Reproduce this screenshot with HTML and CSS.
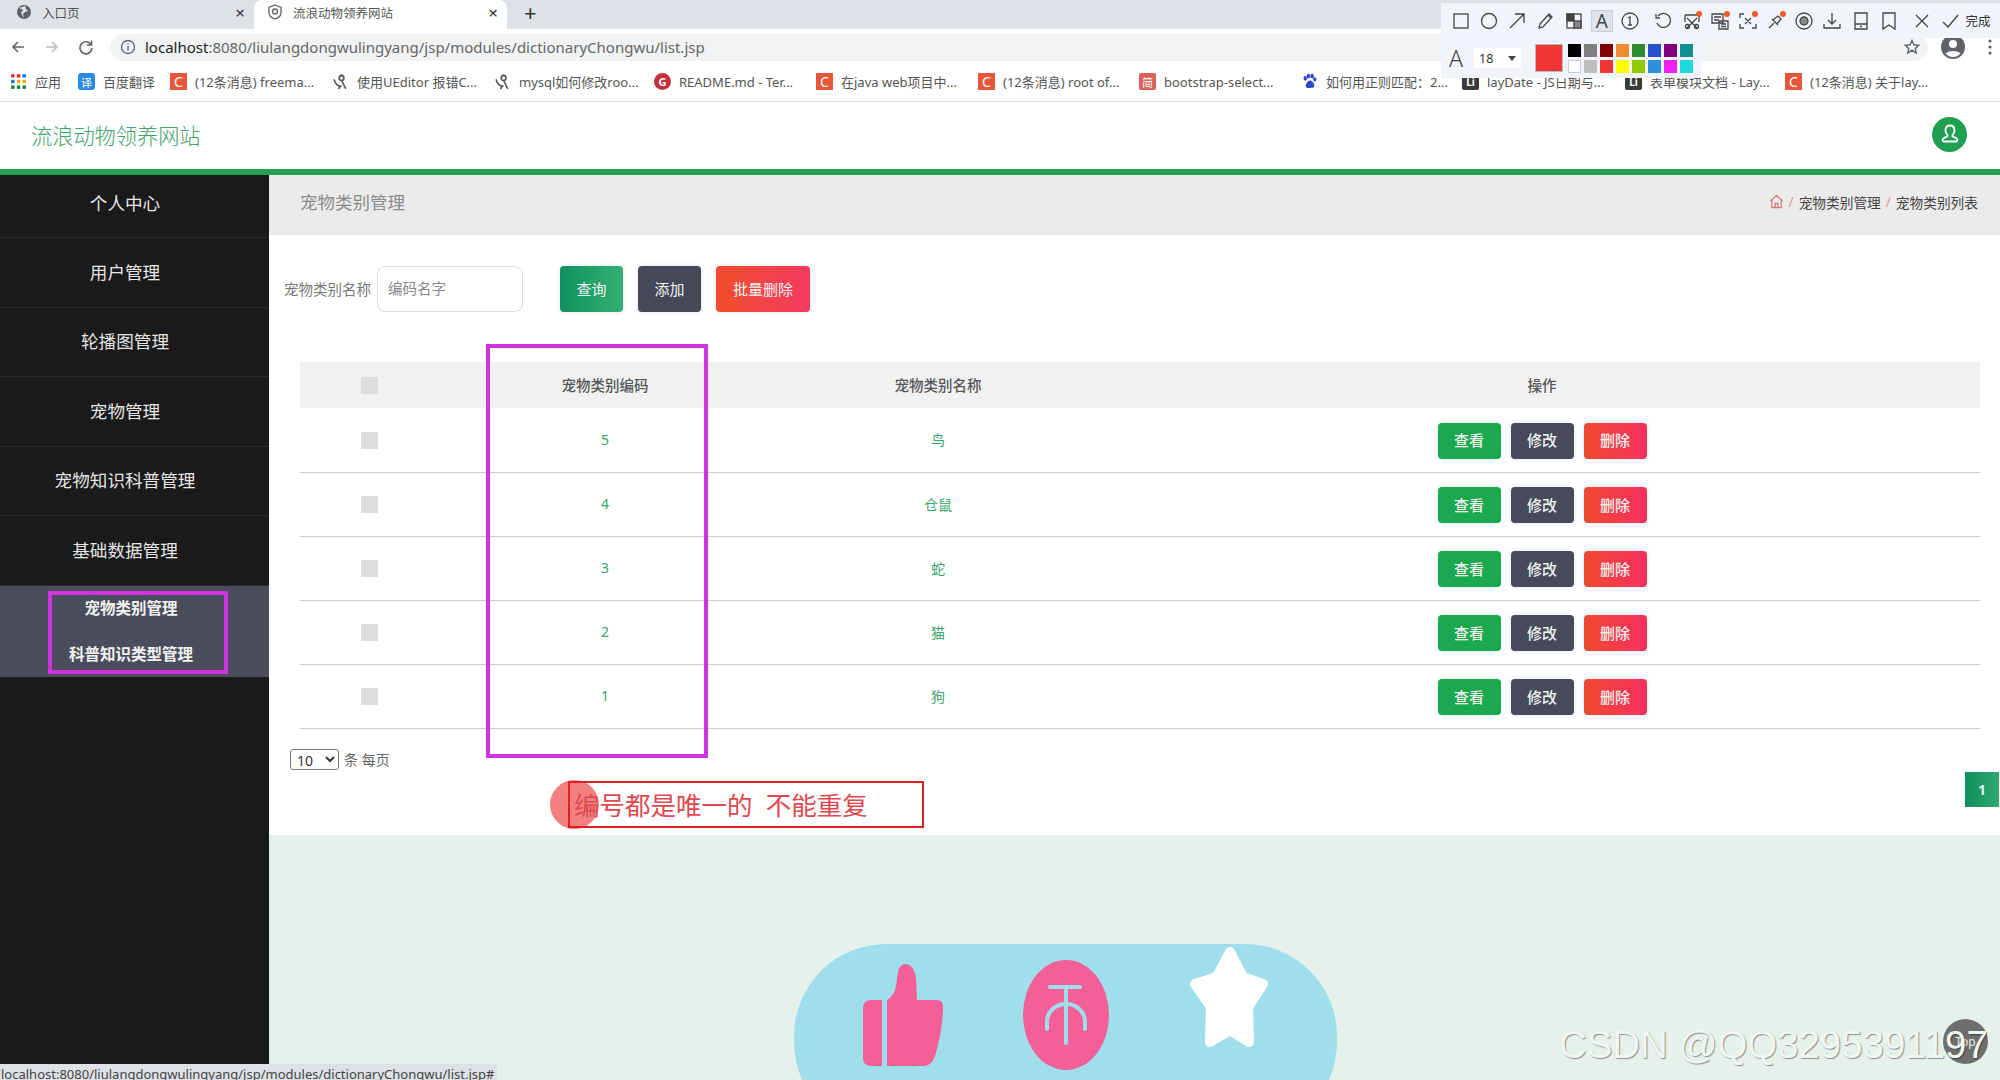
FILE: index.html
```html
<!DOCTYPE html>
<html lang="zh-CN">
<head>
    <meta charset="UTF-8">
    <title>流浪动物领养网站</title>
    <link rel="stylesheet" href="styles.css">
</head>
<body>

    <!-- Browser tabs -->
    <div class="tabstrip">
        <div class="tab">
            <svg class="tab-icon" viewBox="0 0 16 16"><circle cx="8" cy="8" r="7" fill="#5f6368"/><path d="M3 4l3 1 1 2-2 1 1 3 2 3-1-4 2-2 3-1-2-2-1-3-3 1z" fill="#dee1e6"/></svg>
            <span class="tab-title">入口页</span>
            <span class="tab-close">×</span>
        </div>
        <div class="tab tab-active">
            <svg class="tab-icon" viewBox="0 0 16 16"><path d="M8 1l6 2.5V9c0 3-3 5-6 6-3-1-6-3-6-6V3.500z" fill="none" stroke="#5f6368" stroke-width="1.300"/><circle cx="8" cy="7.500" r="2.500" fill="none" stroke="#5f6368" stroke-width="1.300"/></svg>
            <span class="tab-title">流浪动物领养网站</span>
            <span class="tab-close">×</span>
        </div>
        <span class="tab-new">+</span>
    </div>

    <!-- Address bar -->
    <div class="toolbar">
        <svg class="nav-icon" viewBox="0 0 16 16"><path d="M14 8H3M8 3L3 8l5 5" fill="none" stroke="#5f6368" stroke-width="1.600"/></svg>
        <svg class="nav-icon" viewBox="0 0 16 16"><path d="M2 8h11M8 3l5 5-5 5" fill="none" stroke="#b8babd" stroke-width="1.600"/></svg>
        <svg class="nav-icon" viewBox="0 0 16 16"><path d="M13 5.500A6 6 0 1 0 14 9M13.500 1.500v4.500H9" fill="none" stroke="#5f6368" stroke-width="1.600"/></svg>
        <div class="address">
            <svg class="info-icon" viewBox="0 0 16 16"><circle cx="8" cy="8" r="6.500" fill="none" stroke="#5f6368" stroke-width="1.300"/><path d="M8 7v4.500M8 4.500v1.300" stroke="#5f6368" stroke-width="1.400"/></svg>
            <span class="url"><b>localhost</b>:8080/liulangdongwulingyang/jsp/modules/dictionaryChongwu/list.jsp</span>
            <svg class="star-icon" viewBox="0 0 16 16"><path d="M8 1.500l2 4.300 4.600.5-3.400 3.100 1 4.600L8 11.200l-4.200 2.800 1-4.600L1.400 6.300 6 5.800z" fill="none" stroke="#5f6368" stroke-width="1.400"/></svg>
        </div>
        <svg class="profile-icon" viewBox="0 0 24 24"><circle cx="12" cy="12" r="12" fill="#5f6368"/><circle cx="12" cy="9" r="4" fill="#fff"/><path d="M4.500 18.500C7 15 17 15 19.500 18.500 17.500 21 14.500 22 12 22s-5.500-1-7.500-3.500z" fill="#fff"/></svg>
        <svg class="dots-icon" viewBox="0 0 4 16"><circle cx="2" cy="2" r="1.600" fill="#5f6368"/><circle cx="2" cy="8" r="1.600" fill="#5f6368"/><circle cx="2" cy="14" r="1.600" fill="#5f6368"/></svg>
    </div>

    <!-- Bookmarks -->
    <div class="bookmarks">
        <div class="mark">
            <svg class="fav" viewBox="0 0 15 15">
                <g fill="#d93025"><rect x="1" y="1" width="3" height="3"/><rect x="6" y="1" width="3" height="3"/></g>
                <g fill="#1a73e8"><rect x="11" y="1" width="3" height="3"/><rect x="1" y="6" width="3" height="3"/></g>
                <g fill="#f9ab00"><rect x="6" y="6" width="3" height="3"/><rect x="11" y="6" width="3" height="3"/></g>
                <g fill="#188038"><rect x="1" y="11" width="3" height="3"/><rect x="6" y="11" width="3" height="3"/><rect x="11" y="11" width="3" height="3"/></g>
            </svg>
            <span>应用</span>
        </div>
        <div class="mark"><i class="tile tile-blue">译</i><span>百度翻译</span></div>
        <div class="mark"><i class="tile tile-orange">C</i><span>(12条消息) freema...</span></div>
        <div class="mark">
            <svg class="fav" viewBox="0 0 16 16"><path d="M2 6c1 5 4 7 7 6M9 2c-3 1-3 5 0 5s3-4 0-5zM9 7l4 8M8 12l-2 3" fill="none" stroke="#555" stroke-width="1.500"/></svg>
            <span>使用UEditor 报错C...</span>
        </div>
        <div class="mark">
            <svg class="fav" viewBox="0 0 16 16"><path d="M2 6c1 5 4 7 7 6M9 2c-3 1-3 5 0 5s3-4 0-5zM9 7l4 8M8 12l-2 3" fill="none" stroke="#555" stroke-width="1.500"/></svg>
            <span>mysql如何修改roo...</span>
        </div>
        <div class="mark"><i class="tile tile-round">G</i><span>README.md - Ter...</span></div>
        <div class="mark"><i class="tile tile-orange">C</i><span>在java web项目中...</span></div>
        <div class="mark"><i class="tile tile-orange">C</i><span>(12条消息) root of...</span></div>
        <div class="mark"><i class="tile tile-red">简</i><span>bootstrap-select...</span></div>
        <div class="mark">
            <svg class="fav" viewBox="0 0 16 16" fill="#3245c8"><ellipse cx="4" cy="5" rx="1.600" ry="2.200"/><ellipse cx="7" cy="3" rx="1.600" ry="2.200"/><ellipse cx="10.500" cy="3" rx="1.600" ry="2.200"/><ellipse cx="13" cy="6" rx="1.500" ry="2"/><path d="M8.500 7c-2 0-4 3-4 5s2 2.500 4 2 4 .500 4-2-2-5-4-5z"/></svg>
            <span>如何用正则匹配：2...</span>
        </div>
        <div class="mark"><i class="tile tile-dark">Li</i><span>layDate - JS日期与...</span></div>
        <div class="mark"><i class="tile tile-dark">Li</i><span>表单模块文档 - Lay...</span></div>
        <div class="mark"><i class="tile tile-orange">C</i><span>(12条消息) 关于lay...</span></div>
    </div>

    <!-- Site header -->
    <header class="site-head">
        <span class="site-title">流浪动物领养网站</span>
        <div class="avatar">
            <svg viewBox="0 0 24 24" width="24" height="24"><path d="M12 3.500c-3 0-4.500 2.300-4.500 5 0 2 .8 3.500 2 4.500v1.500c-2 1-5 1.500-5 3.500 0 1 .5 1.500 1.500 1.500h12c1 0 1.500-.5 1.500-1.500 0-2-3-2.500-5-3.500V13c1.200-1 2-2.500 2-4.500 0-2.700-1.500-5-4.500-5z" fill="none" stroke="#fff" stroke-width="1.800"/></svg>
        </div>
    </header>

    <div class="site-body">
        <!-- Left menu -->
        <aside class="sidebar">
            <div class="side-item">个人中心</div>
            <div class="side-item">用户管理</div>
            <div class="side-item">轮播图管理</div>
            <div class="side-item">宠物管理</div>
            <div class="side-item">宠物知识科普管理</div>
            <div class="side-item">基础数据管理</div>
            <div class="side-sub">
                <div class="sub-item">宠物类别管理</div>
                <div class="sub-item">科普知识类型管理</div>
            </div>
        </aside>

        <main class="main">
            <div class="page-head">
                <span class="page-title">宠物类别管理</span>
                <div class="crumbs">
                    <svg class="home-icon" viewBox="0 0 16 16"><path d="M1.500 7.500L8 1.500l6.500 6M3 6.500V14.500h10V6.500M6.500 14.500V10h3v4.500" fill="none" stroke="#d9706f" stroke-width="1.200"/></svg>
                    <span class="crumb-sep">/</span>
                    <span>宠物类别管理</span>
                    <span class="crumb-sep">/</span>
                    <span>宠物类别列表</span>
                </div>
            </div>

            <section class="card">
                <div class="search-row">
                    <label class="search-label">宠物类别名称</label>
                    <input class="search-input" type="text" placeholder="编码名字">
                    <button class="btn btn-query">查询</button>
                    <button class="btn btn-add">添加</button>
                    <button class="btn btn-batch">批量删除</button>
                </div>

                <table class="list">
                    <colgroup>
                        <col class="col-check"><col class="col-code"><col class="col-name"><col>
                    </colgroup>
                    <thead>
                        <tr>
                            <th><span class="check"></span></th>
                            <th>宠物类别编码</th>
                            <th>宠物类别名称</th>
                            <th>操作</th>
                        </tr>
                    </thead>
                    <tbody>
                        <tr>
                            <td><span class="check"></span></td><td>5</td><td>鸟</td>
                            <td class="actions"><button class="mini mini-view">查看</button><button class="mini mini-edit">修改</button><button class="mini mini-del">删除</button></td>
                        </tr>
                        <tr>
                            <td><span class="check"></span></td><td>4</td><td>仓鼠</td>
                            <td class="actions"><button class="mini mini-view">查看</button><button class="mini mini-edit">修改</button><button class="mini mini-del">删除</button></td>
                        </tr>
                        <tr>
                            <td><span class="check"></span></td><td>3</td><td>蛇</td>
                            <td class="actions"><button class="mini mini-view">查看</button><button class="mini mini-edit">修改</button><button class="mini mini-del">删除</button></td>
                        </tr>
                        <tr>
                            <td><span class="check"></span></td><td>2</td><td>猫</td>
                            <td class="actions"><button class="mini mini-view">查看</button><button class="mini mini-edit">修改</button><button class="mini mini-del">删除</button></td>
                        </tr>
                        <tr>
                            <td><span class="check"></span></td><td>1</td><td>狗</td>
                            <td class="actions"><button class="mini mini-view">查看</button><button class="mini mini-edit">修改</button><button class="mini mini-del">删除</button></td>
                        </tr>
                    </tbody>
                </table>

                <div class="page-size">
                    <select class="size-select"><option>10</option></select>
                    <span>条 每页</span>
                </div>
                <div class="pager"><span class="page-num">1</span></div>
            </section>

            <!-- Like / coin / favourite -->
            <div class="social">
                <div class="pill">
                    <svg class="thumb" viewBox="0 0 80 102"><path d="M8 36h11v66H8c-5 0-8-3-8-8V44c0-5 3-8 8-8z" fill="#f35f97"/><path d="M24 36c5-3 8-8 9-14l2-14c1-5 4-8 7-8 6 0 10 6 11 14l1 22h20c4 0 6 3 6 7 0 15-4 37-8 49-2 6-6 10-12 10H24z" fill="#f35f97"/></svg>
                    <svg class="coin" viewBox="0 0 86 110"><ellipse cx="43" cy="55" rx="43" ry="55" fill="#f35f97"/><path d="M27 27h30M43 30v53M24 69v-7c0-10 8-18 19-18s19 8 19 18v7" fill="none" stroke="#a0deec" stroke-width="4" stroke-linecap="round"/></svg>
                    <svg class="fave" viewBox="0 0 80 102"><polygon points="41,6 54,31 74,38 59,61 60,96 41,84 21,96 22,61 6,38 28,31" fill="#fff" stroke="#fff" stroke-width="10" stroke-linejoin="round"/></svg>
                </div>
            </div>
        </main>
    </div>

    <!-- Screenshot tool panel -->
    <div class="shot-tools">
        <div class="shot-row">
            <svg class="st" viewBox="0 0 20 20"><rect x="3" y="3" width="14" height="14"/></svg>
            <svg class="st" viewBox="0 0 20 20"><circle cx="10" cy="10" r="7.500"/></svg>
            <svg class="st" viewBox="0 0 20 20"><path d="M3 17L17 3M8 3h9v9"/></svg>
            <svg class="st" viewBox="0 0 20 20"><path d="M4 13L13 3l3 3-9 10-4 1zM12 4l3 3"/></svg>
            <svg class="st" viewBox="0 0 20 20"><rect x="3" y="3" width="14" height="14"/><rect x="3" y="3" width="7" height="7" fill="#444"/><rect x="10" y="10" width="7" height="7" fill="#888"/></svg>
            <span class="st st-on">A</span>
            <svg class="st" viewBox="0 0 20 20"><circle cx="10" cy="10" r="8"/><path d="M8 7l2-1v8M8 14h4"/></svg>
            <svg class="st st-gap" viewBox="0 0 20 20"><path d="M5 5a7 7 0 1 1-1 7M3 3v4h4"/></svg>
            <svg class="st" viewBox="0 0 20 20"><path d="M3 4h14v7M3 4v7M5 17l10-10M15 17L5 7"/><circle cx="5.500" cy="15.500" r="2"/><circle cx="14.500" cy="15.500" r="2"/><circle class="dot" cx="17" cy="3" r="3"/></svg>
            <svg class="st" viewBox="0 0 20 20"><path d="M2 3h11v9H2zM4 6h7M4 9h5M9 10h9v8H9zM11 13h5M11 15.500h5"/><circle class="dot" cx="17" cy="3" r="3"/></svg>
            <svg class="st" viewBox="0 0 20 20"><path d="M2 7V3h4M18 13v4h-4M2 13v4h4M14 3h2M7 7l6 6M13 7l-6 6"/><circle class="dot" cx="17" cy="3" r="3"/></svg>
            <svg class="st" viewBox="0 0 20 20"><path d="M3 17l5-5M6 8l6 6M7 9l5-4 3 3-4 5M12 5l3 3"/><circle class="dot" cx="17" cy="3" r="3"/></svg>
            <svg class="st" viewBox="0 0 20 20"><circle cx="10" cy="10" r="8"/><circle cx="10" cy="10" r="4" fill="#888"/></svg>
            <svg class="st" viewBox="0 0 20 20"><path d="M10 2v11M6 9l4 4 4-4M2 13v4h16v-4"/></svg>
            <svg class="st" viewBox="0 0 20 20"><path d="M4 2h12v16H4zM4 13h12M9 15.500h2"/></svg>
            <svg class="st" viewBox="0 0 20 20"><path d="M4 2h12v16l-6-4-6 4z"/></svg>
            <svg class="st st-gap" viewBox="0 0 20 20"><path d="M4 4l12 12M16 4L4 16"/></svg>
            <svg class="st" viewBox="0 0 20 20"><path d="M3 11l5 5L18 4"/></svg>
            <span class="st-done">完成</span>
        </div>
        <div class="shot-row2">
            <span class="size-a">A</span>
            <div class="size-box"><span>18</span><i class="size-caret"></i></div>
            <span class="color-now"></span>
            <div class="palette">
                <i class="c-black"></i><i class="c-gray"></i><i class="c-maroon"></i><i class="c-orange"></i><i class="c-green"></i><i class="c-blue"></i><i class="c-purple"></i><i class="c-teal"></i>
                <i class="c-white"></i><i class="c-silver"></i><i class="c-red"></i><i class="c-yellow"></i><i class="c-lime"></i><i class="c-sky"></i><i class="c-pink"></i><i class="c-cyan"></i>
            </div>
        </div>
    </div>

    <!-- Annotations drawn over the page -->
    <div class="mark-box mark-side"></div>
    <div class="mark-box mark-code"></div>
    <div class="note-dot"></div>
    <div class="note">编号都是唯一的&nbsp;&nbsp;不能重复</div>

    <div class="to-top">Top</div>
    <div class="watermark">CSDN @QQ3295391197</div>
    <div class="status-bar">localhost:8080/liulangdongwulingyang/jsp/modules/dictionaryChongwu/list.jsp#</div>

</body>
</html>
```

FILE: styles.css
```css
* {
    box-sizing: border-box;
}

html, body {
    height: 100%;
}

body {
    margin: 0;
    width: 2000px;
    height: 1080px;
    overflow: hidden;
    position: relative;
    display: flex;
    flex-direction: column;
    background-color: #fff;
    color: #444;
    font-family: "Noto Sans", "Noto Sans CJK SC", sans-serif;
}

/* browser tabs */
.tabstrip {
    display: flex;
    align-items: center;
    height: 29px;
    background-color: #dee1e6;
}

.tab {
    display: flex;
    align-items: center;
    width: 254px;
    height: 29px;
    padding: 0 9px 5px 16px;
    font-size: 12.500px;
    color: #555;
}

.tab-active {
    width: 253px;
    padding-left: 13px;
    background-color: #fff;
    border-radius: 8px 8px 0 0;
}

.tab-icon {
    width: 16px;
    height: 16px;
    margin-right: 10px;
}

.tab-title {
    flex: 1;
}

.tab-close {
    font-size: 17px;
    line-height: 1;
    color: #333;
}

.tab-new {
    margin: 0 0 5px 17px;
    font-size: 22px;
    line-height: 1;
    color: #333;
}

/* address bar */
.toolbar {
    display: flex;
    align-items: center;
    height: 34px;
    padding: 2px 0 0 10px;
    background-color: #fff;
}

.nav-icon {
    width: 16px;
    height: 16px;
    margin-right: 18px;
}

.nav-icon:nth-child(3) {
    margin-right: 16px;
}

.address {
    display: flex;
    align-items: center;
    width: 1818px;
    height: 27px;
    padding: 0 8px 0 10px;
    border-radius: 14px;
    background-color: #f1f3f4;
}

.info-icon {
    width: 16px;
    height: 16px;
    margin-right: 9px;
}

.url {
    flex: 1;
    font-size: 15px;
    color: #666;
}

.url b {
    font-weight: 400;
    color: #222;
}

.star-icon {
    width: 16px;
    height: 16px;
}

.profile-icon {
    width: 24px;
    height: 24px;
    margin-left: 13px;
}

.dots-icon {
    width: 4px;
    height: 16px;
    margin-left: 23px;
}

/* bookmarks */
.bookmarks {
    display: grid;
    grid-template-columns: 68px 92px 162px 162px 160px 162px 162px 161px 162px 161px 163px 160px 1fr;
    align-items: center;
    height: 39px;
    padding: 0 0 1px 10px;
    border-bottom: 1px solid #ddd;
    font-size: 13px;
    color: #555;
}

.mark {
    display: flex;
    align-items: center;
    white-space: nowrap;
    overflow: hidden;
}

.fav {
    flex: none;
    width: 17px;
    height: 17px;
    margin-right: 8px;
}

.tile {
    flex: none;
    display: flex;
    align-items: center;
    justify-content: center;
    width: 17px;
    height: 17px;
    margin-right: 8px;
    font-style: normal;
    font-size: 11px;
    color: #fff;
}

.tile-blue { background-color: #2b8ce8; border-radius: 3px; }
.tile-orange { background-color: #e9563a; font-size: 14px; }
.tile-red { background-color: #d9635c; border-radius: 2px; }
.tile-dark { background-color: #3a3a3a; border-radius: 2px; font-size: 10px; font-weight: 700; }
.tile-round { background-color: #c62f3e; border-radius: 50%; font-weight: 700; }

/* site header */
.site-head {
    display: flex;
    align-items: center;
    justify-content: space-between;
    height: 73px;
    padding: 0 33px 3px 31px;
    border-bottom: 6px solid #22a04f;
    background-color: #fff;
}

.site-title {
    font-size: 21.200px;
    font-weight: 300;
    color: #3fa36c;
}

.avatar {
    display: flex;
    align-items: center;
    justify-content: center;
    width: 35px;
    height: 35px;
    border-radius: 50%;
    background-color: #1fa050;
}

.site-body {
    flex: 1;
    display: flex;
    min-height: 0;
}

/* left menu */
.sidebar {
    flex: none;
    width: 269px;
    background-color: #1a1a1a;
}

.side-item {
    display: flex;
    align-items: center;
    justify-content: center;
    height: 69.500px;
    padding: 0 19px 2px 0;
    font-size: 17.600px;
    color: #e6e6e6;
}

.side-item:first-child {
    height: 62px;
    padding-bottom: 8px;
}

.side-item + .side-item,
.side-sub {
    border-top: 1px solid #2b2b2b;
}

.side-sub {
    height: 92px;
    background-color: #4a4d5c;
}

.sub-item {
    display: flex;
    align-items: center;
    justify-content: center;
    width: 262px;
    height: 46px;
    padding-bottom: 2px;
    font-size: 15.500px;
    font-weight: 700;
    color: #f2f2f2;
}

/* main column */
.main {
    flex: 1;
    display: flex;
    flex-direction: column;
    min-width: 0;
    background-color: #e5f2ec;
}

.page-head {
    display: flex;
    align-items: center;
    justify-content: space-between;
    height: 60px;
    padding: 0 22px 7px 31px;
    background-color: #ebebeb;
}

.page-title {
    font-size: 17.500px;
    color: #8c8c8c;
}

.crumbs {
    display: flex;
    align-items: center;
    gap: 5px;
    font-size: 13.700px;
    color: #444;
}

.home-icon {
    width: 15px;
    height: 15px;
}

.crumb-sep {
    color: #d99;
}

.card {
    background-color: #fff;
    padding-bottom: 28px;
}

.search-row {
    display: flex;
    align-items: center;
    height: 46px;
    margin-top: 31px;
    padding-left: 15px;
}

.search-label {
    width: 93px;
    padding-bottom: 2px;
    font-size: 14.500px;
    white-space: nowrap;
    color: #777;
}

.search-input {
    width: 146px;
    height: 46px;
    margin-right: 37px;
    padding: 0 10px 2px;
    border: 1px solid #ddd;
    border-radius: 8px;
    font: inherit;
    font-size: 14.500px;
}

.search-input::placeholder {
    color: #888;
}

.btn {
    height: 46px;
    width: 63px;
    margin-right: 15px;
    padding: 0 0 2px;
    border: none;
    border-radius: 4px;
    font: inherit;
    font-size: 15px;
    color: #f4f4f4;
    box-shadow: 0 0 4px rgba(120, 150, 190, 0.3);
}

.btn-query { background: linear-gradient(90deg, #0f9160, #35b072); }
.btn-add { background-color: #454857; }
.btn-batch { width: 94px; background: linear-gradient(90deg, #f04e2c, #f43a60); }

/* table */
.list {
    width: 1680px;
    margin: 50px 0 0 31px;
    table-layout: fixed;
    border-collapse: collapse;
    text-align: center;
    font-size: 14px;
}

.col-check { width: 138px; }
.col-code { width: 334px; }
.col-name { width: 332px; }

.list th {
    height: 46px;
    padding: 0 0 2px;
    background-color: #f1f1f1;
    font-size: 14.500px;
    font-weight: 500;
    color: #555;
}

.list td {
    height: 64px;
    padding: 0 0 1px;
    border-bottom: 1px solid #ccc;
    color: #3aa56a;
}

.list td.actions {
    padding: 2px 0 0;
    font-size: 0;
}

.check {
    display: inline-block;
    width: 17px;
    height: 17px;
    vertical-align: middle;
    background-color: #dcdddf;
}

.mini {
    width: 63px;
    height: 36px;
    margin: 0 5px;
    padding: 0 0 2px;
    border: none;
    border-radius: 4px;
    font: inherit;
    font-size: 15px;
    font-weight: 500;
    color: #f2f2f2;
    box-shadow: 0 0 5px rgba(100, 160, 220, 0.25);
}

.mini-view { background-color: #1ba84e; }
.mini-edit { background-color: #464a5c; }
.mini-del { background: linear-gradient(90deg, #f0492f, #f43060); }

.page-size {
    display: flex;
    align-items: center;
    gap: 5px;
    height: 21px;
    margin: 20px 0 0 21px;
    font-size: 14px;
    color: #666;
}

.size-select {
    width: 49px;
    height: 21px;
    padding: 0 0 0 2px;
    border: 1px solid #777;
    border-radius: 3px;
    background-color: #fff;
    font: inherit;
    color: #333;
}

.pager {
    display: flex;
    justify-content: flex-end;
    margin-top: 2px;
    padding-right: 1px;
}

.page-num {
    display: flex;
    align-items: center;
    justify-content: center;
    width: 34px;
    height: 35px;
    background: linear-gradient(90deg, #109060, #2ea86c);
    font-size: 14px;
    font-weight: 700;
    color: #e8f4ee;
}

/* like / coin / favourite */
.social {
    flex: 1;
    min-height: 0;
    padding: 109px 0 0 525px;
}

.pill {
    display: flex;
    position: relative;
    width: 543px;
    height: 190px;
    border-radius: 92px;
    background-color: #a0deec;
}

.thumb {
    position: absolute;
    left: 69px;
    top: 20px;
    width: 80px;
    height: 102px;
}

.coin {
    position: absolute;
    left: 229px;
    top: 16px;
    width: 86px;
    height: 110px;
}

.fave {
    position: absolute;
    left: 395px;
    top: 2px;
    width: 80px;
    height: 102px;
}

/* screenshot tool panel */
.shot-tools {
    position: absolute;
    left: 1441px;
    top: 3px;
    width: 559px;
    height: 35px;
    background-color: #f2f4fb;
}

.shot-row {
    display: flex;
    align-items: center;
    height: 35px;
    padding-left: 10px;
}

.st {
    flex: none;
    width: 20px;
    height: 20px;
    margin-right: 8.200px;
    fill: none;
    stroke: #444;
    stroke-width: 1.300;
}

.dot {
    fill: #ef5a28;
    stroke: none;
}

.st-on {
    display: flex;
    align-items: center;
    justify-content: center;
    background-color: #dfe2ec;
    outline: 1px solid #ccd;
    font-size: 19px;
    color: #444;
}

.st-gap {
    margin-left: 5px;
}

.st-done {
    font-size: 12.500px;
    margin-left: -3px;
    color: #333;
}

.shot-row2 {
    display: flex;
    align-items: center;
    width: 260px;
    height: 40px;
    padding-left: 8px;
    background-color: #f2f4fb;
}

.size-a {
    width: 25px;
    font-size: 23px;
    font-weight: 300;
    color: #444;
}

.size-box {
    display: flex;
    align-items: center;
    justify-content: space-between;
    width: 47px;
    height: 20px;
    padding: 0 5px;
    background-color: #fff;
    font-size: 12.500px;
    color: #333;
}

.size-caret {
    border: 4px solid transparent;
    border-top: 5px solid #444;
    border-bottom: none;
}

.color-now {
    width: 28px;
    height: 28px;
    margin-left: 14px;
    border: 1px solid #bbb;
    background-color: #f03535;
}

.palette {
    display: grid;
    grid-template-columns: repeat(8, 13px);
    grid-template-rows: repeat(2, 13px);
    gap: 3px;
    margin-left: 5px;
}

.c-black { background-color: #000; }
.c-gray { background-color: #808080; }
.c-maroon { background-color: #800000; }
.c-orange { background-color: #f08a30; }
.c-green { background-color: #2e8b2e; }
.c-blue { background-color: #2a50d0; }
.c-purple { background-color: #800080; }
.c-teal { background-color: #109090; }
.c-white { background-color: #fff; border: 1px solid #ccc; }
.c-silver { background-color: #c0bdbd; }
.c-red { background-color: #f03535; }
.c-yellow { background-color: #ffff00; }
.c-lime { background-color: #90c800; }
.c-sky { background-color: #3090e0; }
.c-pink { background-color: #f020f0; }
.c-cyan { background-color: #20d8e0; }

/* annotations */
.mark-box {
    position: absolute;
    border: 4px solid #d233e0;
}

.mark-side {
    left: 48px;
    top: 591px;
    width: 180px;
    height: 83px;
}

.mark-code {
    left: 486px;
    top: 344px;
    width: 222px;
    height: 414px;
}

.note {
    position: absolute;
    left: 568px;
    top: 781px;
    width: 356px;
    height: 47px;
    padding-left: 4px;
    border: 2px solid #e02020;
    font-size: 25.500px;
    line-height: 44px;
    color: #e0484f;
}

.note-dot {
    position: absolute;
    left: 550px;
    top: 780px;
    width: 49px;
    height: 49px;
    border-radius: 50%;
    background-color: rgba(235, 60, 60, 0.65);
}

.watermark {
    position: absolute;
    left: 1559px;
    top: 1023px;
    font-family: "Liberation Sans", sans-serif;
    font-size: 38.400px;
    line-height: 44px;
    white-space: nowrap;
    color: #eff6f3;
    text-shadow: 1px 1px 1px rgba(0, 0, 0, 0.4);
}

.to-top {
    position: absolute;
    left: 1943px;
    top: 1019px;
    width: 45px;
    height: 45px;
    border-radius: 50%;
    background-color: rgba(95, 95, 95, 0.9);
    font-size: 12px;
    line-height: 45px;
    text-align: center;
    color: #eee;
}

.status-bar {
    position: absolute;
    left: 0;
    top: 1064px;
    width: 497px;
    height: 16px;
    padding-left: 1px;
    overflow: hidden;
    background-color: #dee1e6;
    font-size: 13px;
    line-height: 21px;
    white-space: nowrap;
    color: #444;
}
```
